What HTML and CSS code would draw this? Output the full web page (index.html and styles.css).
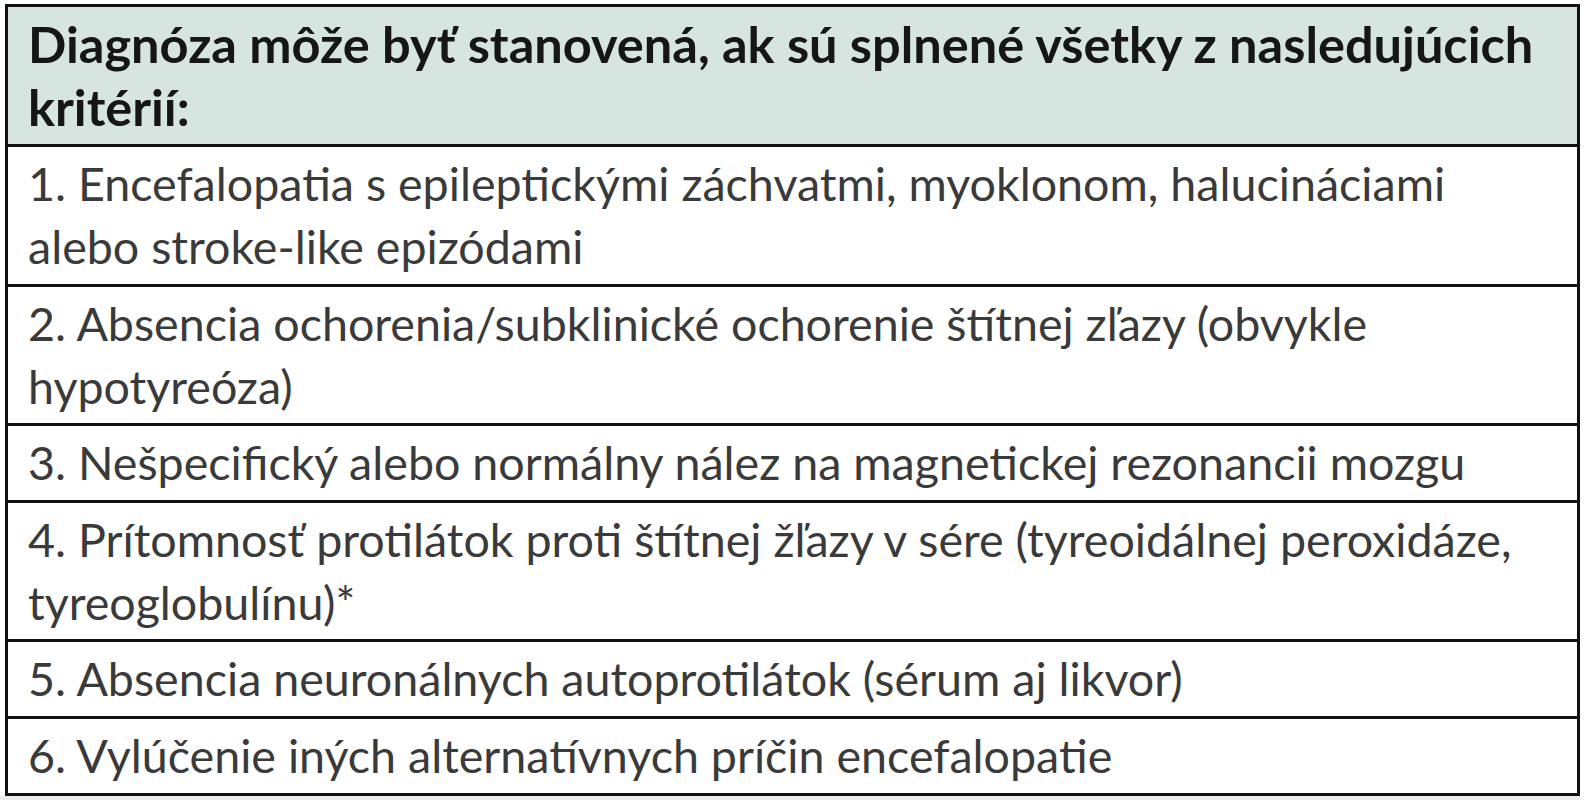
FILE: index.html
```
<!DOCTYPE html>
<html lang="sk">
<head>
<meta charset="utf-8">
<title>Kritériá diagnózy</title>
<link rel="stylesheet" href="styles.css">
</head>
<body>
<div class="page">
  <table class="criteria">
    <thead>
      <tr><th>Diagnóza môže byť stanovená, ak sú splnené všetky z nasledujúcich kritérií:</th></tr>
    </thead>
    <tbody>
      <tr><td>1. Encefalopatia s epileptickými záchvatmi, myoklonom, halucináciami alebo stroke-like epizódami</td></tr>
      <tr><td>2. Absencia ochorenia/subklinické ochorenie štítnej zľazy (obvykle hypotyreóza)</td></tr>
      <tr><td>3. Nešpecifický alebo normálny nález na magnetickej rezonancii mozgu</td></tr>
      <tr><td>4. Prítomnosť protilátok proti štítnej žľazy v sére (tyreoidálnej peroxidáze, tyreoglobulínu)*</td></tr>
      <tr><td>5. Absencia neuronálnych autoprotilátok (sérum aj likvor)</td></tr>
      <tr><td>6. Vylúčenie iných alternatívnych príčin encefalopatie</td></tr>
    </tbody>
  </table>
  <div class="shade"></div>
</div>
</body>
</html>
```
FILE: styles.css
```
html, body {
  margin: 0;
  padding: 0;
  background: #ffffff;
}
.page {
  width: 1580px;
  padding-top: 4px;
}
.criteria {
  margin-left: 5px;
  width: 1575px;
  border-collapse: collapse;
  border: 3px solid #0d0d0d;
  font-family: Lato, "Open Sans", sans-serif;
}
.criteria th,
.criteria td {
  border: 3px solid #111111;
  text-align: left;
  padding: 5px 42px 5.6px 20px;
  line-height: 63px;
}
.criteria th {
  background: #d7e5e1;
  color: #161616;
  font-weight: 700;
  font-size: 50.5px;
  padding-bottom: 6px;
}
.criteria td {
  background: #ffffff;
  color: #3a3a3a;
  font-weight: 400;
  font-size: 46.6px;
}
.shade {
  height: 6px;
  background: #ececec;
}
```
